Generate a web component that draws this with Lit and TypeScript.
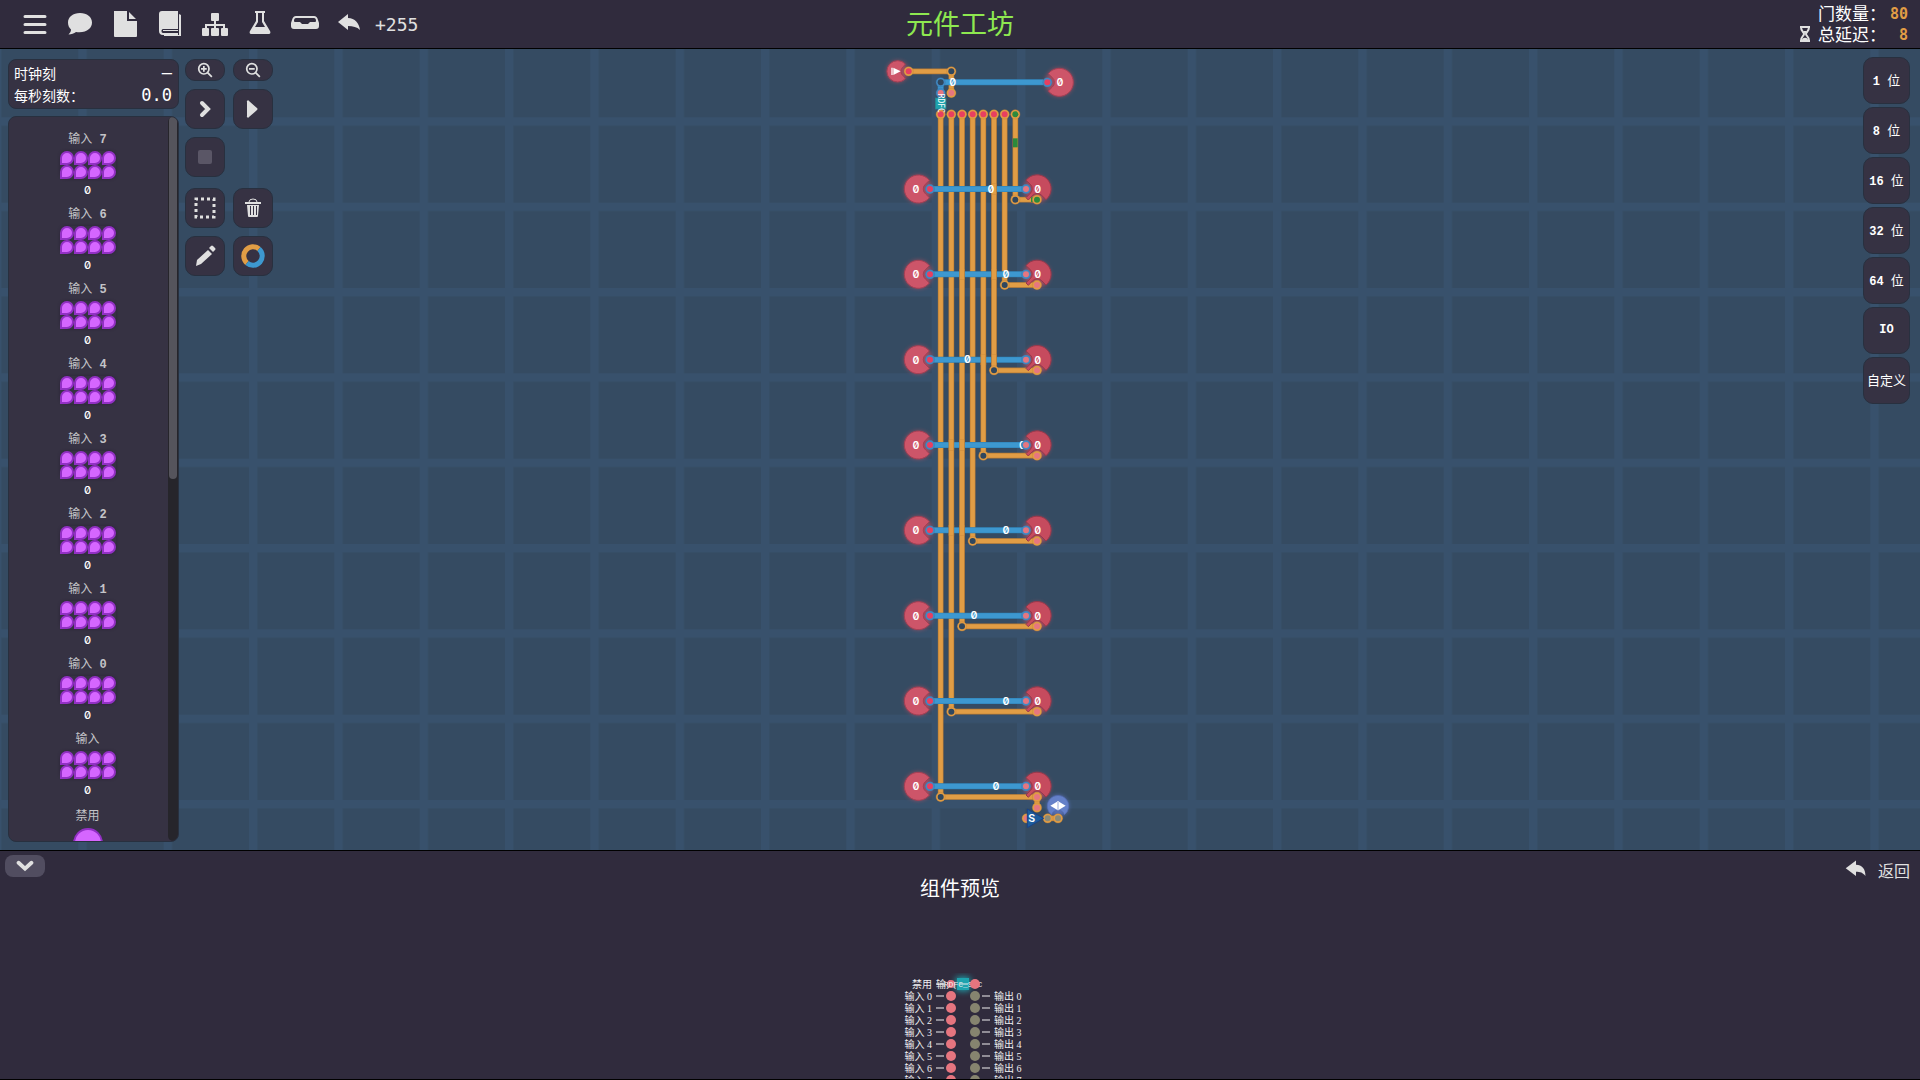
import { LitElement, html, svg, css, nothing } from "lit";
import { customElement } from "lit/decorators.js";

const COLS = [0, 1, 2, 3, 4, 5, 6, 7];
const ROWS = [
  { tag: 2973, over: [5] },
  { tag: 3018, over: [2, 5] },
  { tag: 2902, over: [4, 5] },
  { tag: 3067, over: [1, 2] },
  { tag: 3018, over: [1, 2] },
  { tag: 2922, over: [] },
  { tag: 3018, over: [] },
  { tag: 2988, over: [] },
];
const colX = (i: number) => 2822 + 32 * i;
const rowY = (i: number) => 420 + 256 * i;

/* Circuit board on a free canvas; one grid step is 32 units. */
@customElement("circuit-board")
export class CircuitBoard extends LitElement {
  static styles = css`
    :host { display: block; width: 100%; height: 100%; }
    .board { display: block; width: 100%; height: 100%; }
    .cell { fill: #354b62; }
    .line { fill: #38516c; }
    .o-edge { stroke: #b87b35; stroke-width: 17; fill: none; }
    .o { stroke: #e19d45; stroke-width: 13; fill: none; }
    .b-edge { stroke: #2f7fb3; stroke-width: 18; fill: none; }
    .b { stroke: #3d98d0; stroke-width: 15; fill: none; }
    .g { stroke: #2c8a3c; stroke-width: 14; fill: none; }
    .g-fill { fill: #2c8a3c; }
    .ring-o { fill: #e19d45; stroke: #bf8038; stroke-width: 1; }
    .ring-b { fill: #4189c4; stroke: #3577ab; stroke-width: 1; }
    .red { fill: #e83f60; }
    .pink { fill: #e67680; }
    .hole { fill: #30475e; }
    .grey { fill: #8b8a78; }
    .glow { fill: #f2505f; opacity: 0.55; filter: blur(6px); }
    .glow-v { fill: #6f86e6; opacity: 0.6; filter: blur(6px); }
    .node { fill: #cd5569; stroke: #a53f54; stroke-width: 3; }
    .node-out { fill: #c64b5e; stroke: #98384b; stroke-width: 3; }
    .switch { fill: #6480c8; stroke: #5169b4; stroke-width: 2; }
    .tri { fill: #1d5c9c; stroke: #1a4287; stroke-width: 3; }
    .teal { fill: #1ea3ae; stroke: #27858f; stroke-width: 2; }
    .white { fill: #fff; }
    text { font-family: Inter, sans-serif; font-feature-settings: "zero", "tnum"; font-weight: 600; font-size: 32px; fill: #fff; text-anchor: middle; }
    .chip { font-family: "DejaVu Sans Mono", monospace; font-size: 24px; font-weight: 400; text-anchor: start; }
  `;

  private wire(d: string, kind: "o" | "b") {
    return svg`<path class=${kind + "-edge"} d=${d}></path><path class=${kind} d=${d}></path>`;
  }

  private pin(x: number, y: number, ring: string, core: string) {
    return svg`<circle class=${ring} cx=${x} cy=${y} r="14"></circle><circle class=${core} cx=${x} cy=${y} r="9"></circle>`;
  }

  private source(x: number, y: number, flip = false) {
    return svg`<g transform="translate(${x} ${y})${flip ? " scale(-1 1)" : ""}">
      <circle class="glow" r="42"></circle>
      <path class="node" d="M33 -26A42 42 0 1 0 33 26L22 15A19 19 0 0 1 22 -15Z"></path></g>`;
  }

  private gate(x: number, y: number) {
    return svg`<g transform="translate(${x} ${y})">
      <path class="node-out" d="M-33 -26A42 42 0 1 1 27 32L14 19A19 19 0 0 0 -13 19L-26 33L-33 26L-20 13A19 19 0 0 0 -20 -14Z"></path></g>`;
  }

  private row(i: number) {
    const y = rowY(i);
    const x = colX(7 - i);
    const r = ROWS[i];
    return svg`
      ${this.source(2755, y)}
      <circle class="glow" cx="3111" cy=${y} r="40"></circle>
      ${this.wire(`M${x} ${y + 32}H3111`, "o")}
      ${this.gate(3111, y)}
      ${this.wire(`M2800 ${y}H3070`, "b")}
      ${r.over.map((c) => this.wire(`M${colX(c)} ${y - 16}v32`, "o"))}
      ${i === 0 ? svg`<path class="g" d="M3093 ${y + 32}h6"></path>` : nothing}
      ${this.pin(x, y + 32, "ring-o", "hole")}
      ${this.pin(3111, y + 32, "ring-o", i === 0 ? "g-fill" : "pink")}
      <text x=${r.tag} y=${y + 11}>0</text>
      ${this.pin(2790, y, "ring-b", "red")}
      ${this.pin(3078, y, "ring-b", "pink")}
      <text x="2748" y=${y + 12}>0</text>
      <text x="3113" y=${y + 12}>0</text>`;
  }

  render() {
    return html`<svg class="board" viewBox="0 0 5760 2403" preserveAspectRatio="xMidYMid slice" aria-hidden="true">
      <defs>
        <pattern id="grid" x="235" y="205" width="256" height="256" patternUnits="userSpaceOnUse">
          <rect class="cell" width="256" height="256"></rect>
          <rect class="line" width="25" height="256"></rect>
          <rect class="line" width="256" height="25"></rect>
        </pattern>
      </defs>
      <rect width="5760" height="2403" fill="url(#grid)"></rect>

      <circle class="glow" cx="2693" cy="67" r="32"></circle>
      <path class="node" d="M2716 45A32 32 0 1 0 2716 89L2711 82A18 18 0 0 1 2711 52Z"></path>
      <path class="white" d="M2674 56h4v22h-4zM2680 56l22 11l-22 11Z"></path>
      ${this.wire("M2726 67H2854V132", "o")}
      ${this.wire("M2822 132V100H3130", "b")}
      ${this.source(3178, 100, true)}
      ${this.pin(2726, 67, "ring-o", "red")}
      ${this.pin(2854, 67, "ring-o", "hole")}
      ${this.pin(2854, 132, "ring-o", "pink")}
      ${this.pin(2822, 100, "ring-b", "hole")}
      ${this.pin(2822, 132, "ring-b", "pink")}
      ${this.pin(3142, 100, "ring-b", "red")}
      <text x="2858" y="111">0</text>
      <text x="3180" y="112">0</text>

      ${COLS.map((i) => this.wire(`M${colX(i)} 196V${rowY(7 - i) + 32}`, "o"))}
      <path class="g" d="M3046 268v27"></path>
      ${COLS.map((i) => this.pin(colX(i), 196, "ring-o", i === 7 ? "g-fill" : "red"))}
      <rect class="teal" x="2806" y="147" width="32" height="33"></rect>
      <text class="chip" transform="translate(2815 134) rotate(90)">RDFC</text>
      ${COLS.map((i) => this.row(i))}

      ${this.wire("M3111 2244V2276", "o")}
      ${this.pin(3111, 2244, "ring-o", "pink")}
      ${this.pin(3111, 2276, "ring-o", "pink")}
      <circle class="glow-v" cx="3174" cy="2271" r="32"></circle>
      <path class="switch" d="M3155 2297A32 32 0 1 1 3193 2297A20 20 0 0 0 3155 2297Z"></path>
      <path class="white" d="M3151 2270l20 -12v24ZM3197 2270l-20 -12v24ZM3172 2256h4v28h-4z"></path>
      ${this.wire("M3143 2308H3174", "o")}
      ${this.pin(3143, 2308, "ring-o", "grey")}
      ${this.pin(3174, 2308, "ring-o", "grey")}
      ${this.pin(3080, 2308, "ring-o", "pink")}
      <path class="tri" d="M3082 2280L3131 2308L3082 2336Z"></path>
      <text x="3095" y="2318">S</text>
    </svg>`;
  }
}

/* Pin layout of the finished component, 12px per pin. */
@customElement("component-preview")
export class ComponentPreview extends LitElement {
  static styles = css`
    :host { display: block; height: 106px; overflow: hidden; }
    .pins { display: block; margin: 0 auto; }
    text { font-family: "Liberation Serif", "Noto Sans CJK SC", serif; font-size: 10px; fill: #f0f0f2; }
    .l { text-anchor: end; }
    .m { text-anchor: middle; font-family: "Liberation Mono", monospace; font-size: 8px; }
    .dash { stroke: #f0f0f2; stroke-width: 1; }
    .in { fill: #e6757f; }
    .out { fill: #86846f; }
    .glow { fill: #1ea3ae; filter: blur(3px); }
    .chip { fill: #1ea3ae; }
  `;
  render() {
    return html`<svg class="pins" width="160" height="118" viewBox="880 973 160 118" aria-hidden="true">
      <rect class="glow" x="956" y="977" width="14" height="14"></rect>
      <rect class="chip" x="957" y="978" width="12" height="12"></rect>
      <path class="dash" d="M960 984h8M936 984h8"></path>
      <text class="l" x="932" y="988">禁用</text>
      <text class="l" x="956" y="988">输入</text>
      <circle class="in" cx="951" cy="984" r="4"></circle>
      <text class="m" x="963" y="987">RDFC_SRC</text>
      <circle class="in" cx="975" cy="984" r="5"></circle>
      ${COLS.map((i) => {
        const y = 996 + 12 * i;
        return svg`<text class="l" x="932" y=${y + 4}>输入 ${i}</text>
          <path class="dash" d="M936 ${y}h8M982 ${y}h8"></path>
          <circle class="in" cx="951" cy=${y} r="5"></circle>
          <circle class="out" cx="975" cy=${y} r="5"></circle>
          <text x="994" y=${y + 4}>输出 ${i}</text>`;
      })}
    </svg>`;
  }
}

const icon = (body: unknown, size = 28) =>
  html`<svg class="icon" width=${size} height=${size} viewBox="0 0 28 28" fill="currentColor" aria-hidden="true">${body}</svg>`;

const reply = svg`<path d="M2 12L14 3v5c7 0 11 5 11 13c-3-4-6-5-11-5v5Z"></path>`;

const TOOLS = [
  { name: "菜单", art: svg`<path d="M4 5h20a1 1 0 0 1 0 3H4a1 1 0 0 1 0-3zM4 13h20a1 1 0 0 1 0 3H4a1 1 0 0 1 0-3zM4 21h20a1 1 0 0 1 0 3H4a1 1 0 0 1 0-3z"></path>` },
  { name: "消息", art: svg`<path d="M14 3C7 3 2 7 2 12.500c0 3 1 5 3 7C5 21.500 4 23 2.500 24.500c3 0 5.500-1 7.500-2.500c10 1.500 16-3.500 16-9.500C26 7 21 3 14 3Z"></path>` },
  { name: "文件", art: svg`<path d="M3 1h13v10h10v15a1 1 0 0 1-1 1H4a1 1 0 0 1-1-1zM18 2l7 7h-7z"></path>` },
  { name: "手册", art: svg`<path d="M6 1h16v18H7c-2 0-2 4 0 4h15v2H7c-3 0-4-2-4-4V4c0-2 1-3 3-3zM7 20h15v1H7zM23 4l2 1v21H8v-1h15z"></path>` },
  { name: "结构", art: svg`<path d="M11 3h6a1 1 0 0 1 1 1v6a1 1 0 0 1-1 1h-2v3h9v4h2a1 1 0 0 1 1 1v6a1 1 0 0 1-1 1h-5a1 1 0 0 1-1-1v-6a1 1 0 0 1 1-1h1v-2h-7v2h2a1 1 0 0 1 1 1v6a1 1 0 0 1-1 1h-6a1 1 0 0 1-1-1v-6a1 1 0 0 1 1-1h2v-2H6v2h1a1 1 0 0 1 1 1v6a1 1 0 0 1-1 1H2a1 1 0 0 1-1-1v-6a1 1 0 0 1 1-1h2v-4h9v-3h-2a1 1 0 0 1-1-1V4a1 1 0 0 1 1-1z"></path>` },
  { name: "测试", art: svg`<path fill-rule="evenodd" d="M9 1h10v2h-1v8l6 10c1 2 0 3-2 3H6c-2 0-3-1-2-3l6-10V3H9zM12 3v9l-3 5h10l-3-5V3z"></path>` },
  { name: "收纳", art: svg`<path fill-rule="evenodd" d="M5 6h18q3 0 4 4l1 3v3q0 3-3 3H3q-3 0-3-3v-3l1-3q1-4 4-4zM5 8q-2 0-2 3q0 1 1 1h5l2 2h6l2-2h5q1 0 1-1q0-3-2-3z"></path>` },
  { name: "撤销", art: svg`<path d="M2 12L12 4v4c7 0 11 5 12 12c-3-3-7-4-12-4v4Z"></path>` },
];

const magnifier = (plus: boolean) => svg`<g fill="none" stroke="currentColor" stroke-width="3">
  <circle cx="12" cy="12" r="9"></circle><path d="M18 18l8 8M7 12h10"></path>${plus ? svg`<path d="M12 7v10"></path>` : nothing}</g>`;

const LABELS = ["输入 7", "输入 6", "输入 5", "输入 4", "输入 3", "输入 2", "输入 1", "输入 0", "输入"];
const GROUPS = ["1 位", "8 位", "16 位", "32 位", "64 位", "IO", "自定义"];

@customElement("app-root")
export class AppRoot extends LitElement {
  static styles = css`
    :host {
      display: flex; flex-direction: column; height: 100vh; overflow: hidden;
      background: #302b3d; color: #fff;
      font-family: "Noto Sans CJK SC", sans-serif; font-size: 14px;
    }
    button {
      font: inherit; color: #e0e0e0; padding: 0; margin: 0; border: 0; background: none;
      display: flex; align-items: center; justify-content: center; white-space: pre;
    }
    .icon { display: block; flex: none; }
    .mono { font-family: "DejaVu Sans Mono", monospace; }

    .top { display: grid; grid-template-columns: 1fr auto 1fr; align-items: center; height: 48px; border-bottom: 1px solid #000; flex: none; }
    .tools { display: flex; align-items: center; padding-left: 12px; }
    .tool { width: 45px; height: 48px; }
    .delta { font-size: 18px; color: #e0e0e0; padding-left: 3px; }
    .title { margin: 0; align-self: start; font-size: 27px; line-height: 46px; font-weight: 400; color: #8ee850; }
    .stats { justify-self: end; padding: 0 12px 2px 0; font-size: 17px; line-height: 21px; }
    .stat { display: flex; justify-content: flex-end; align-items: center; gap: 4px; }
    .stat .num { width: 18px; text-align: right; font-size: 15px; line-height: 24px; height: 21px; font-weight: 700; color: #e19d45; }
    .glass { margin-right: 3px; color: #e0e0e0; }

    .work { position: relative; flex: 1; min-height: 0; display: flex; border-bottom: 1px solid #000; margin-bottom: -1px; overflow: hidden; }
    .canvas { position: absolute; inset: 0; }
    .overlay { position: relative; flex: 1; min-width: 0; display: flex; align-items: stretch; padding: 10px 10px 8px 8px; box-sizing: border-box; }
    .side { width: 171px; display: flex; flex-direction: column; gap: 7px; }
    .panel { background: #363243; border: 1px solid #28303f; border-radius: 8px; box-sizing: border-box; }
    .clock { padding: 2px 6px 2px 5px; flex: none; }
    .tick { display: flex; justify-content: space-between; align-items: center; height: 22px; line-height: 22px; }
    .tick .mono { font-size: 17px; }
    .inputs { flex: 1; min-height: 0; display: flex; overflow: hidden; }
    .list { flex: 1; overflow: hidden; padding: 14px 2px 0 0; margin: 0; list-style: none; }
    .item { display: flex; flex-direction: column; align-items: center; height: 75px; }
    .label { font-family: "Liberation Mono", "Noto Sans CJK SC", sans-serif; font-size: 12px; line-height: 18px; color: #c4c4c8; font-weight: 700; }
    .cjk { font-weight: 400; }
    .bits { display: grid; grid-template-columns: repeat(4, 14px); grid-auto-rows: 14px; margin: 2px 0; border-radius: 7px; box-shadow: 0 0 3px #2a2238; }
    .bit { background: #d566ff; border: 2px solid #9230c4; border-radius: 7px 7px 7px 0; box-sizing: border-box; }
    .value { font-family: Inter, sans-serif; font-feature-settings: "zero"; font-size: 11px; font-weight: 500; line-height: 18px; }
    .lamp { padding-top: 2px; }
    .bulb { width: 30px; height: 30px; margin-top: 2px; border-radius: 50%; background: #d566ff; border: 2px solid #9230c4; box-sizing: border-box; flex: none; }
    .track { width: 10px; background: #26252b; border-radius: 5px; flex: none; }
    .thumb { height: 50%; margin: 0 1px; border-radius: 5px; background: #55545c; }

    .pad { display: grid; grid-template-columns: 40px 40px; gap: 8px; align-content: start; margin-left: 6px; }
    .btn { background: #363243; border: 1px solid #28303f; border-radius: 10px; box-sizing: border-box; height: 40px; }
    .zoom { height: 22px; }
    .stop { grid-column: 1 / 3; width: 40px; color: #5a5666; margin-bottom: 3px; }

    .groups { margin-left: auto; display: flex; flex-direction: column; gap: 3px; margin-top: -2px; }
    .group { width: 47px; height: 47px; flex: none; color: #fff; font-family: "Liberation Mono", "Noto Sans CJK SC", sans-serif; font-size: 12px; font-weight: 700; padding-bottom: 2px; }
    .group .cjk { font-size: 13px; }

    .bottom { position: relative; flex: none; height: 230px; box-sizing: border-box; border-top: 1px solid #000; border-bottom: 1px solid #000; display: flex; flex-direction: column; }
    .bar { display: grid; grid-template-columns: 1fr auto 1fr; align-items: start; height: 122px; flex: none; }
    .fold { width: 40px; height: 22px; margin: 4px 0 0 5px; border-radius: 8px; background: #514d60; }
    .heading { margin: 22px 0 0; font-size: 20px; line-height: 30px; font-weight: 400; }
    .back { justify-self: end; gap: 10px; margin: 7px 10px 0 0; font-size: 16px; line-height: 24px; }
  `;

  private text(label: string) {
    return label.split(/([\u4e00-\u9fff]+)/).map((part) =>
      /[\u4e00-\u9fff]/.test(part) ? html`<span class="cjk">${part}</span>` : part);
  }

  render() {
    return html`
      <header class="top">
        <nav class="tools">
          ${TOOLS.map((t) => html`<button class="tool" aria-label=${t.name}>${icon(t.art)}</button>`)}
          <span class="delta mono">+255</span>
        </nav>
        <h1 class="title">元件工坊</h1>
        <div class="stats">
          <div class="stat"><span>门数量：</span><span class="num mono">80</span></div>
          <div class="stat">
            <svg class="icon glass" width="12" height="16" viewBox="0 0 12 16" aria-hidden="true">
              <path d="M1 1h10M1 15h10M2 1c0 5 3 5 3 7s-3 2-3 7M10 1c0 5-3 5-3 7s3 2 3 7" fill="none" stroke="currentColor" stroke-width="2"></path>
              <path d="M3 14c0-3 6-3 6 0zM4 5h4l-2 3z" fill="currentColor"></path>
            </svg>
            <span>总延迟：</span><span class="num mono">8</span>
          </div>
        </div>
      </header>

      <main class="work">
        <circuit-board class="canvas"></circuit-board>
        <div class="overlay">
          <aside class="side">
            <section class="panel clock">
              <div class="tick"><span>时钟刻</span><span class="mono">–</span></div>
              <div class="tick"><span>每秒刻数：</span><span class="mono">0.0</span></div>
            </section>
            <section class="panel inputs">
              <ul class="list">
                ${LABELS.map((l) => html`<li class="item">
                  <span class="label">${this.text(l)}</span>
                  <div class="bits">${COLS.map(() => html`<span class="bit"></span>`)}</div>
                  <span class="value">0</span>
                </li>`)}
                <li class="item lamp"><span class="label">${this.text("禁用")}</span><span class="bulb"></span></li>
              </ul>
              <div class="track"><div class="thumb"></div></div>
            </section>
          </aside>

          <div class="pad">
            <button class="btn zoom" aria-label="放大">${icon(magnifier(true), 16)}</button>
            <button class="btn zoom" aria-label="缩小">${icon(magnifier(false), 16)}</button>
            <button class="btn" aria-label="单步">${icon(svg`<path d="M11 8l6 6l-6 6" fill="none" stroke="currentColor" stroke-width="4" stroke-linecap="round"></path>`)}</button>
            <button class="btn" aria-label="运行">${icon(svg`<path d="M8 7a1 1 0 0 1 2-1l8 7q1 1 0 2l-8 7a1 1 0 0 1-2-1z"></path>`)}</button>
            <button class="btn stop" aria-label="停止">${icon(svg`<rect x="7" y="7" width="14" height="14" rx="2"></rect>`)}</button>
            <button class="btn" aria-label="选择">${icon(svg`<rect x="5" y="5" width="18" height="18" fill="none" stroke="currentColor" stroke-width="3" stroke-dasharray="3 3" stroke-dashoffset="1"></rect>`)}</button>
            <button class="btn" aria-label="删除">${icon(svg`<path fill-rule="evenodd" d="M6 8h16v2H6zM8 11h12l-1 11q0 1-1 1h-8q-1 0-1-1zM11 12v9h1v-9zM14 12v9h1v-9zM17 12v9h1v-9z"></path><path d="M10 8q0-3 4-3t4 3" fill="none" stroke="currentColor" stroke-width="1"></path>`)}</button>
            <button class="btn" aria-label="绘制">${icon(svg`<path d="M17 8l4 4L10 22l-5 2l1-6zM18 6l2-2q1-1 2 0l2 2q1 1 0 2l-2 2z"></path>`)}</button>
            <button class="btn" aria-label="颜色">${icon(svg`<g fill="none" stroke-width="5"><path d="M8 21A9 9 0 0 1 20 7" stroke="#e19d45"></path><path d="M20 7A9 9 0 0 1 8 21" stroke="#3d98d0"></path></g>`)}</button>
          </div>

          <nav class="groups">
            ${GROUPS.map((g) => html`<button class="btn group"><span>${this.text(g)}</span></button>`)}
          </nav>
        </div>
      </main>

      <section class="bottom">
        <div class="bar">
          <button class="fold" aria-label="收起">${icon(svg`<path d="M4 9l10 9l10-9" fill="none" stroke="currentColor" stroke-width="6" stroke-linecap="round"></path>`, 18)}</button>
          <h2 class="heading">组件预览</h2>
          <button class="back">${icon(reply, 24)}<span>返回</span></button>
        </div>
        <component-preview></component-preview>
      </section>
    `;
  }
}
